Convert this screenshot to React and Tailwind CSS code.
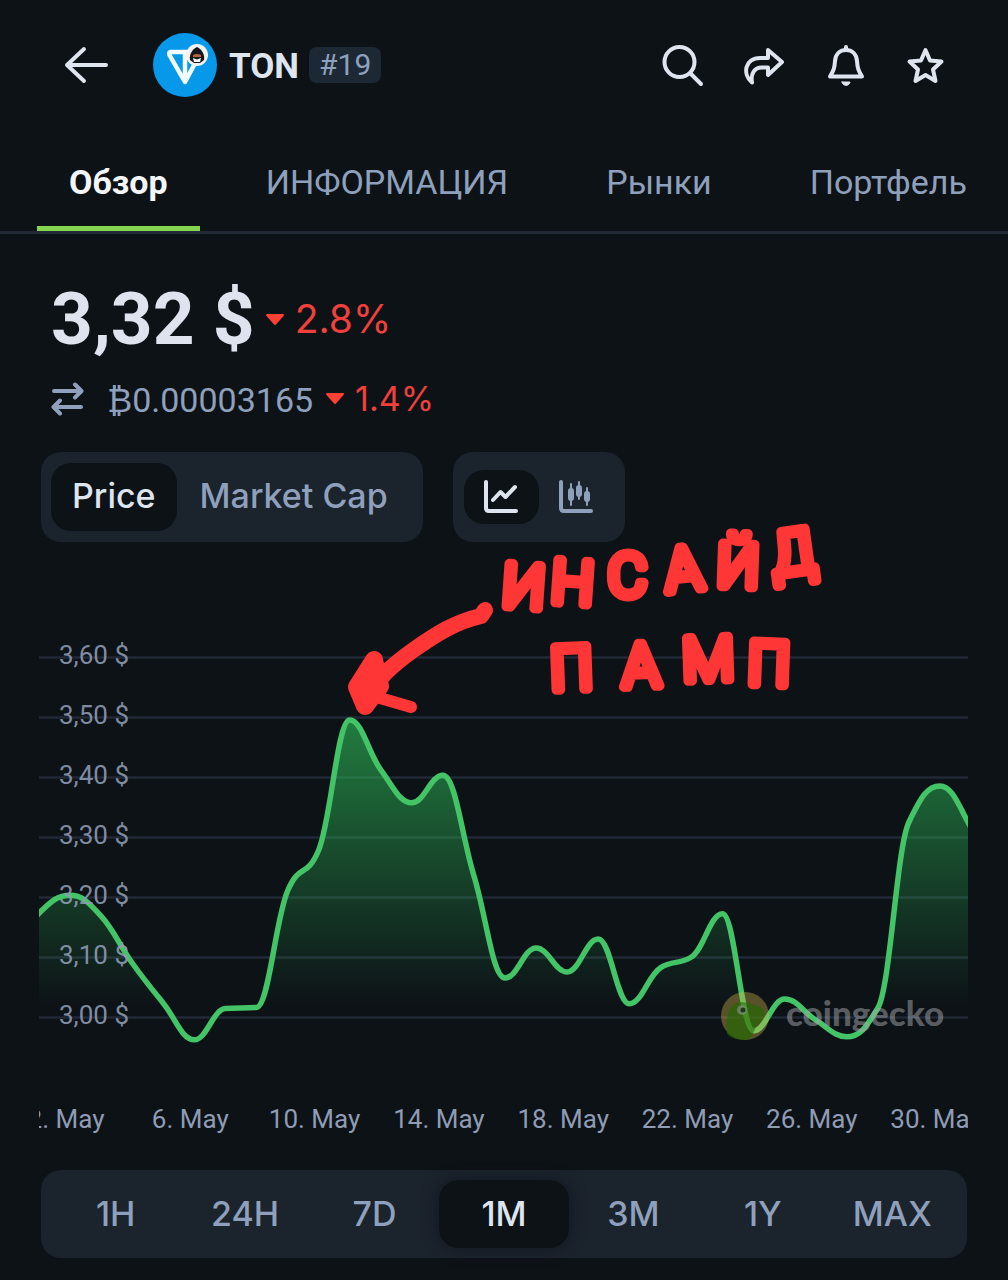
import React, { useState } from 'react';

const tabs = ['Обзор', 'ИНФОРМАЦИЯ', 'Рынки', 'Портфель'];
const ranges = ['1H', '24H', '7D', '1M', '3M', '1Y', 'MAX'];
const priceLevels = [3.6, 3.5, 3.4, 3.3, 3.2, 3.1, 3.0];
const dateLabels = ['2. May', '6. May', '10. May', '14. May', '18. May', '22. May', '26. May', '30. May'];

// daily prices, the first and the last two fall outside the visible range
const prices = [
  3.1, 3.173, 3.203, 3.168, 3.09, 3.023, 2.962, 3.014, 3.016, 3.21, 3.278, 3.495, 3.412, 3.357, 3.403,
  3.235, 3.065, 3.115, 3.075, 3.13, 3.022, 3.082, 3.1, 3.172, 2.977, 3.03, 2.995, 2.967, 3.015, 3.325,
  3.385, 3.315, 3.2,
];

const LEFT = 39;
const RIGHT = 968;
const STEP = 31.07;
const priceY = (price) => 1017 - (price - 3) * 600;

// smooth line with flat peaks, never overshooting its points
function splinePath(points) {
  const reach = STEP * 0.4;
  const slopes = points.map((p, i) => {
    const last = points[i - 1];
    const next = points[i + 1];
    if (!last || !next) return 0;
    const before = p.y - last.y;
    const after = next.y - p.y;
    if (before * after <= 0) return 0;
    const limit = 0.72 * Math.min(Math.abs(before), Math.abs(after));
    return Math.sign(after) * Math.min(limit, Math.abs(before + after) * 0.2);
  });

  return points
    .map((p, i) => {
      if (i === 0) return `M ${p.x} ${p.y}`;
      const last = points[i - 1];
      return `C ${last.x + reach} ${last.y + slopes[i - 1]} ${p.x - reach} ${p.y - slopes[i]} ${p.x} ${p.y}`;
    })
    .join(' ');
}

function TonLogo() {
  return (
    <svg viewBox="0 0 64 64" className="size-16" aria-hidden="true">
      <circle cx="32" cy="32" r="32" fill="#0798ea" />
      <path d="M18 19 H45 Q48 19 46.500 22 L32 49 L17 23 Q15 19 18 19 Z M32 19 V48" fill="none" stroke="#f3fbff" strokeWidth="4.500" strokeLinejoin="round" />
      <circle cx="44" cy="22" r="11" fill="#f3f3f3" />
      <path d="M44 14 C39 16 36 22 37 27 L41 30 H47 L51 27 C52 22 49 16 44 14 Z" fill="#17161a" />
      <path d="M40 22 Q44 20 48 22 V24 H40 Z" fill="#b5673f" />
      <path d="M40 25 L44 26.500 L48 25 L47 29 H41 Z" fill="#fff" />
    </svg>
  );
}

function HeaderIcon({ label, children }) {
  return (
    <button type="button" aria-label={label}>
      <svg viewBox="0 0 44 44" className="size-11" fill="none" stroke="#dfe5ef" strokeWidth="4" strokeLinecap="round" strokeLinejoin="round">
        {children}
      </svg>
    </button>
  );
}

function Header() {
  return (
    <header className="flex h-[130px] items-center pl-16 pr-[60px]">
      <button type="button" aria-label="Back">
        <svg viewBox="0 0 44 44" className="size-11" fill="none" stroke="#dfe5ef" strokeWidth="4" strokeLinecap="round" strokeLinejoin="round">
          <path d="M42 22 H3 M20 6 L3 22 L20 38" />
        </svg>
      </button>
      <div className="ml-[45px] flex items-center">
        <TonLogo />
        <h1 className="ml-3 pt-1 text-[35px] font-bold text-[#dfe5ef]">TON</h1>
        <span className="ml-2.5 rounded-lg bg-[#1d2835] px-2.5 text-[30px] leading-9 text-[#8fa0bc]">#19</span>
      </div>
      <div className="ml-auto flex gap-[37px]">
        <HeaderIcon label="Search">
          <circle cx="18.500" cy="19" r="15" />
          <path d="M29.500 30.500 L40 41" />
        </HeaderIcon>
        <HeaderIcon label="Share">
          <path d="M26 7 L40 19 L26 32 V24.500 H20 C12 24.500 8.500 31 10 39.500 C0 31 3 15 18 15 H26 Z" />
        </HeaderIcon>
        <HeaderIcon label="Notifications">
          <path d="M7 33.500 H39 C35 27 34.500 25 34 18 C33.500 11 29 7 23 7 C17 7 12.500 11 12 18 C11.500 25 11 27 7 33.500 Z M23 4 V6" />
          <path d="M19 39 H27 C26.500 43.500 19.500 43.500 19 39 Z" fill="#dfe5ef" strokeWidth="1" />
        </HeaderIcon>
        <HeaderIcon label="Favorite">
          <path d="M21.500 7 L26 17.500 L37.500 18.500 L29 26.500 L31.500 38 L21.500 32 L11.500 38 L14 26.500 L5.500 18.500 L17 17.500 Z" />
        </HeaderIcon>
      </div>
    </header>
  );
}

function DownTriangle() {
  return (
    <svg viewBox="0 0 20 14" className="h-3.5 w-5" aria-hidden="true">
      <path d="M2 3 H18 L10 12 Z" fill="#ff4034" stroke="#ff4034" strokeWidth="2" strokeLinejoin="round" />
    </svg>
  );
}

function PriceSummary() {
  return (
    <section className="pl-[51px]">
      <div className="flex items-center">
        <p className="text-[73px] font-bold leading-[86px] text-[#dfe3ee]">3,32 $</p>
        <p className="ml-2.5 flex items-center gap-2.5 font-[Inter] text-[39px] text-[#f0403c]">
          <DownTriangle />
          2.8%
        </p>
      </div>
      <div className="mt-2 flex h-[60px] items-center">
        <svg viewBox="0 0 36 36" className="size-9" fill="none" stroke="#8fa0bc" strokeWidth="4" strokeLinecap="round" strokeLinejoin="round" aria-hidden="true">
          <path d="M3 9 H30 M24 2.500 L30.500 9 L24 15.500 M30 25 H3 M9 18.500 L2.500 25 L9 31.500" />
        </svg>
        <p className="ml-5 text-[34px] text-[#8fa0bc]">₿0.00003165</p>
        <p className="ml-3 flex items-center gap-2.5 pb-1 font-[Inter] text-[34px] text-[#f0403c]">
          <DownTriangle />
          1.4%
        </p>
      </div>
    </section>
  );
}

function ChartControls() {
  const [metric, setMetric] = useState('Price');
  const [type, setType] = useState('line');

  return (
    <div className="mt-[22px] flex gap-[30px] pl-[41px] font-[Inter]">
      <div className="flex h-[90px] items-center gap-0.5 rounded-[20px] bg-[#1b232d] pl-2.5 pr-3.5">
        {['Price', 'Market Cap'].map((name) => (
          <button
            key={name}
            type="button"
            onClick={() => setMetric(name)}
            className={`h-[68px] rounded-[20px] px-[21px] pb-1 text-[34px] font-medium ${metric === name ? 'bg-[#0d1217] text-[#dfe5ef]' : 'text-[#8fa0bc]'}`}
          >
            {name}
          </button>
        ))}
      </div>
      <div className="flex h-[90px] items-center rounded-[20px] bg-[#1b232d] px-[11px]">
        <button
          type="button"
          aria-label="Line chart"
          onClick={() => setType('line')}
          className={`flex h-[54px] w-[75px] items-center justify-center rounded-[20px] ${type === 'line' ? 'bg-[#0d1217] text-[#dfe5ef]' : 'text-[#8fa0bc]'}`}
        >
          <svg viewBox="0 0 36 36" className="size-9" fill="none" stroke="currentColor" strokeWidth="4" strokeLinecap="round" strokeLinejoin="round">
            <path d="M3 3 V29 Q3 32 6 32 H33 M10 21 L17.500 13 L22.500 18 L32 8" />
          </svg>
        </button>
        <button
          type="button"
          aria-label="Candlestick chart"
          onClick={() => setType('candle')}
          className={`flex h-[54px] w-[75px] items-center justify-center rounded-[20px] ${type === 'candle' ? 'bg-[#0d1217] text-[#dfe5ef]' : 'text-[#8fa0bc]'}`}
        >
          <svg viewBox="0 0 36 36" className="size-9" fill="none" stroke="currentColor" strokeWidth="4" strokeLinecap="round" strokeLinejoin="round">
            <path d="M3 3 V29 Q3 32 6 32 H33" />
            <path d="M13 5 V26 M21 3 V20 M29 9 V26" strokeWidth="2" />
            <path d="M13 12 V19 M21 9 V15 M29 15 V20" strokeWidth="6" />
          </svg>
        </button>
      </div>
    </div>
  );
}

function Note() {
  return (
    <g fill="#ff3636" stroke="#ff3636" strokeLinecap="round" strokeLinejoin="round">
      <path d="M485 610 L481 616 C455 622 436 634 412 651 C390 667 379 678 370 692" fill="none" strokeWidth="16" />
      <path d="M374 660 L357 687 L365 706 L380 686 Z" strokeWidth="18" />
      <path d="M366 694 L411 707" strokeWidth="12" />
      <g strokeWidth="10" fontSize="60" fontWeight="300">
        <text x="501 550 608 667 716 774" y="606 602 596 592 586 576" rotate="4 4 0 -6 2 -8">ИНСАЙД</text>
        <text x="551 623 683 747" y="690 687 681 684" rotate="-2 -2 -2 2">ПАМП</text>
      </g>
    </g>
  );
}

function PriceChart() {
  const points = prices.map((price, i) => ({ x: LEFT + (i - 1) * STEP, y: priceY(price) }));
  const line = splinePath(points);
  const area = `${line} V 1060 H ${points[0].x} Z`;

  return (
    <svg viewBox="39 560 929 590" className="mt-[18px] block h-auto w-full overflow-visible" role="img" aria-label="TON price chart">
      <defs>
        <linearGradient id="area" gradientUnits="userSpaceOnUse" x1="0" y1="720" x2="0" y2="1005">
          <stop offset="0" stopColor="#2fc45a" stopOpacity="0.6" />
          <stop offset="1" stopColor="#2fc45a" stopOpacity="0" />
        </linearGradient>
        <clipPath id="plot">
          <rect x={LEFT} y="560" width={RIGHT - LEFT} height="590" />
        </clipPath>
      </defs>

      <g clipPath="url(#plot)">
        {priceLevels.map((level) => (
          <path key={level} d={`M ${LEFT} ${priceY(level) + 0.5} H ${RIGHT}`} stroke="#212936" strokeWidth="2.5" />
        ))}
        <path d={area} fill="url(#area)" />
        <path d={line} fill="none" stroke="#43c467" strokeWidth="5.5" strokeLinejoin="round" />

        <g fill="#8f9cb4" fontSize="26">
          {priceLevels.map((level) => (
            <text key={level} x="59" y={priceY(level) + 7} fillOpacity="0.9">
              {level.toFixed(2).replace('.', ',')} $
            </text>
          ))}
          {dateLabels.map((label, i) => (
            <text key={label} x={66 + i * 124.3} y="1128" textAnchor="middle">
              {label}
            </text>
          ))}
        </g>
      </g>

      <g>
        <circle cx="745" cy="1016" r="24" fill="#d6b84a" fillOpacity="0.38" />
        <path d="M727 1034 C726 1020 727 1009 734 1004 C744 1000 754 1004 763 1009 C768 1017 760 1022 756 1027 L750 1039 C741 1041 732 1039 727 1034 Z" fill="#1e6b00" fillOpacity="0.6" />
        <circle cx="742" cy="1010" r="5" fill="#8b9290" fillOpacity="0.6" />
        <circle cx="743" cy="1010" r="2.5" fill="#1c3a1c" />
        <text x="786" y="1026" fontFamily="Lato, sans-serif" fontWeight="900" fontSize="35" fill="#a5a9ae" fillOpacity="0.5">coingecko</text>
      </g>

      <Note />
    </svg>
  );
}

export default function App() {
  const [activeTab, setActiveTab] = useState('Обзор');
  const [range, setRange] = useState('1M');

  return (
    <div className="min-h-screen overflow-x-hidden bg-[#0d1217] pb-[22px] font-[Roboto,sans-serif]">
      <Header />

      <nav className="flex h-[104px] gap-[34px] border-b-3 border-[#212936] pl-[37px]">
        {tabs.map((tab) => (
          <button
            key={tab}
            type="button"
            onClick={() => setActiveTab(tab)}
            className={`border-b-5 px-8 pt-2 text-[34px] ${activeTab === tab ? 'border-[#85d64f] font-bold text-[#f3f6fa]' : 'border-transparent text-[#8fa0bc]'}`}
          >
            {tab}
          </button>
        ))}
      </nav>

      <main className="pt-[42px]">
        <PriceSummary />
        <ChartControls />
        <div className="pl-[39px] pr-10">
          <PriceChart />
        </div>

        <div className="mx-[41px] mt-5 grid grid-cols-7 rounded-[20px] bg-[#1b232d] p-2.5 font-[Inter]">
          {ranges.map((name) => (
            <button
              key={name}
              type="button"
              onClick={() => setRange(name)}
              className={`h-[68px] rounded-[20px] pb-0.5 text-[34px] font-medium ${range === name ? 'bg-[#0d1217] text-[#dfe5ef] shadow-[0_0_16px_#14161f]' : 'text-[#8fa0bc]'}`}
            >
              {name}
            </button>
          ))}
        </div>
      </main>
    </div>
  );
}
